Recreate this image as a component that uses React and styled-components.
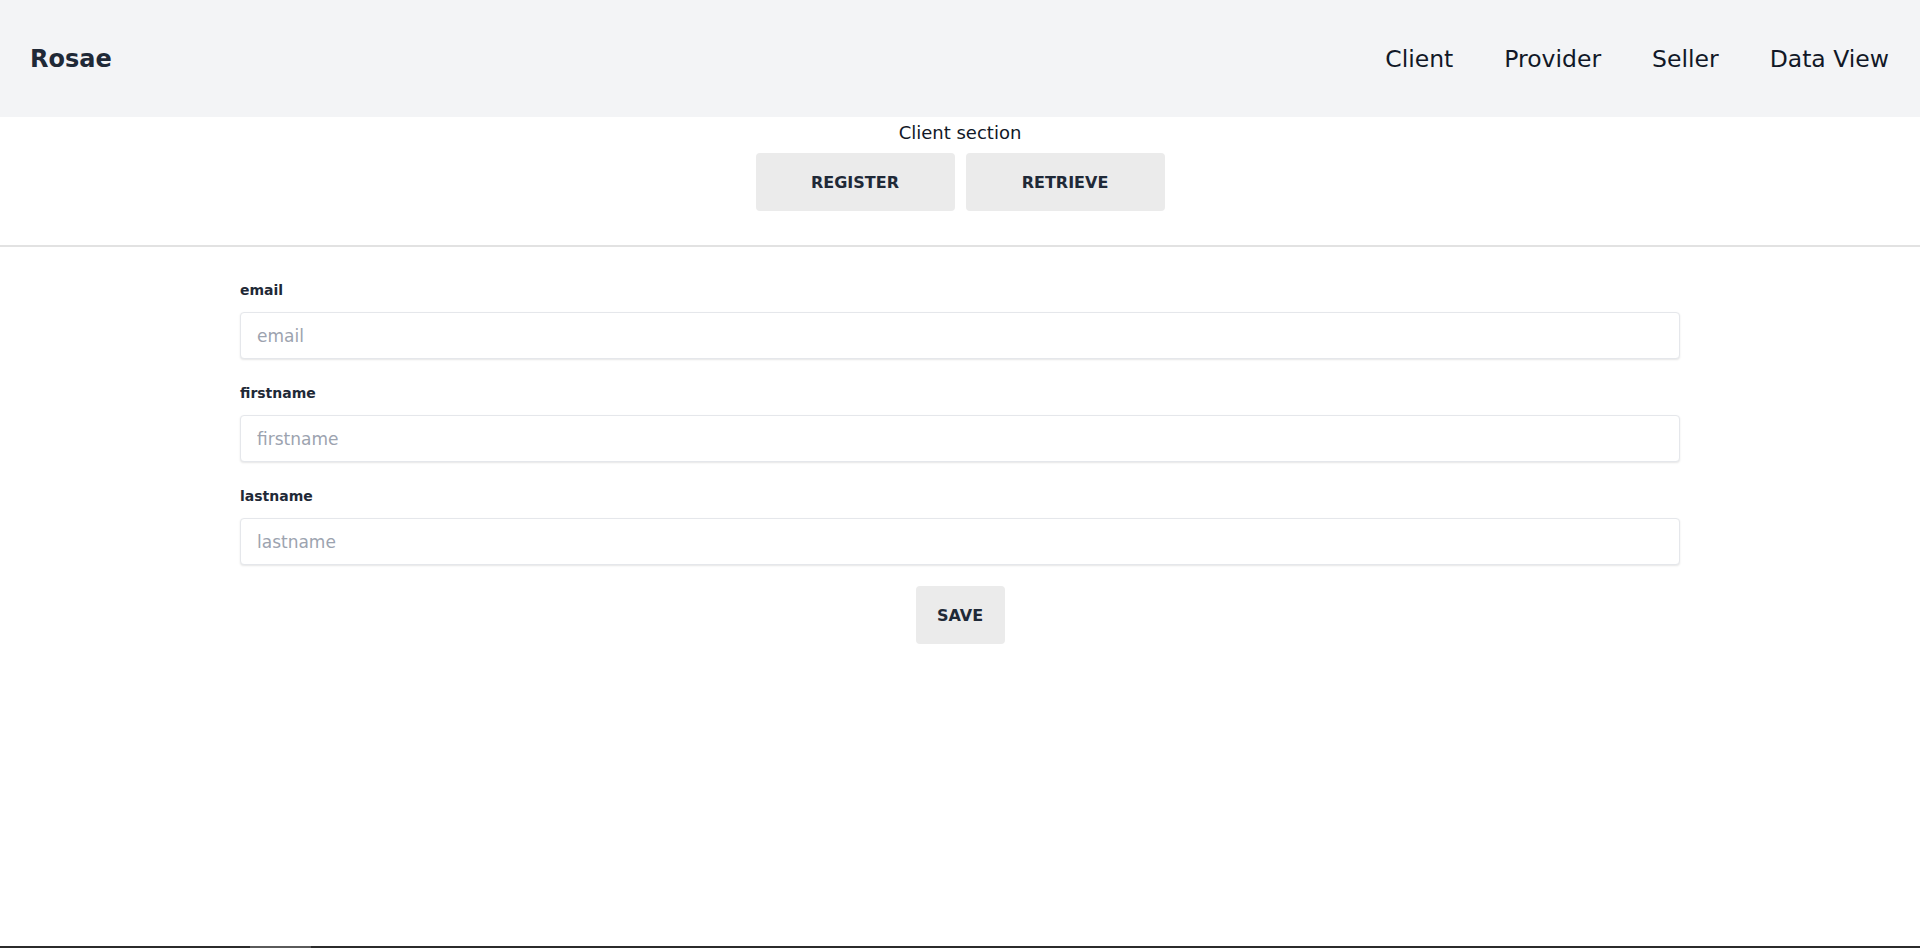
import React, { useState } from "react";
import styled, { createGlobalStyle } from "styled-components";

const GlobalStyle = createGlobalStyle`
  * {
    box-sizing: border-box;
  }

  body {
    margin: 0;
    background: #fff;
    font-family: "Comic Sans MS", "DejaVu Sans", sans-serif;
    color: #1f2937;
  }
`;

const App = () => {
  const [section, setSection] = useState("register");
  const [form, setForm] = useState({ email: "", firstname: "", lastname: "" });

  const handleChange = (e) => {
    setForm({ ...form, [e.target.name]: e.target.value });
  };

  const handleSave = (e) => {
    e.preventDefault();
  };

  return (
    <>
      <GlobalStyle />
      <Header>
        <Brand>Rosae</Brand>
        <Nav>
          <NavLink href="#client">Client</NavLink>
          <NavLink href="#provider">Provider</NavLink>
          <NavLink href="#seller">Seller</NavLink>
          <NavLink href="#data">Data View</NavLink>
        </Nav>
      </Header>

      <Section>
        <SectionTitle>Client section</SectionTitle>
        <Tabs>
          <Button $wide onClick={() => setSection("register")}>
            REGISTER
          </Button>
          <Button $wide onClick={() => setSection("retrieve")}>
            RETRIEVE
          </Button>
        </Tabs>
      </Section>

      <Divider />

      <Form onSubmit={handleSave} data-section={section}>
        {["email", "firstname", "lastname"].map((field) => (
          <Field key={field}>
            <Label htmlFor={field}>{field}</Label>
            <Input
              id={field}
              name={field}
              type="text"
              value={form[field]}
              onChange={handleChange}
              placeholder={field}
            />
          </Field>
        ))}
        <Button type="submit">SAVE</Button>
      </Form>

      <BottomBar>
        <Thumb />
      </BottomBar>
    </>
  );
};

const Header = styled.header`
  height: 117px;
  background: #f3f4f6;
  display: flex;
  align-items: center;
  justify-content: space-between;
  padding: 0 31px 0 30px;
`;

const Brand = styled.div`
  font-size: 24px;
  font-weight: 700;
  color: #1f2937;
`;

const Nav = styled.nav`
  display: flex;
  align-items: center;
  gap: 51px;
`;

const NavLink = styled.a`
  font-size: 23.5px;
  color: #111827;
  text-decoration: none;
  cursor: pointer;
`;

const Section = styled.div`
  display: flex;
  flex-direction: column;
  align-items: center;
  padding-top: 4px;
`;

const SectionTitle = styled.p`
  margin: 0;
  font-size: 18px;
  line-height: 24px;
  color: #111827;
`;

const Tabs = styled.div`
  display: flex;
  gap: 11px;
  margin-top: 8px;
`;

const Button = styled.button`
  width: ${(p) => (p.$wide ? "199px" : "89px")};
  height: 58px;
  background: #ebebeb;
  border: none;
  border-radius: 4px;
  font-family: inherit;
  font-size: 16px;
  font-weight: 700;
  color: #1f2937;
  cursor: pointer;
  padding: 0;
`;

const Divider = styled.hr`
  margin: 34px 0 0;
  border: none;
  border-top: 2px solid #e2e2e2;
`;

const Form = styled.form`
  width: 75%;
  margin: 33px auto 0;
  display: flex;
  flex-direction: column;
  align-items: center;
`;

const Field = styled.div`
  width: 100%;
  margin-bottom: 24px;

  &:last-of-type {
    margin-bottom: 21px;
  }
`;

const Label = styled.label`
  display: block;
  font-size: 14px;
  font-weight: 700;
  line-height: 20px;
  color: #1f2937;
  margin-bottom: 12px;
`;

const Input = styled.input`
  width: 100%;
  height: 47px;
  padding: 0 16px;
  border: 1px solid #e5e7eb;
  border-radius: 4px;
  box-shadow: 0 1px 2px rgba(0, 0, 0, 0.1);
  font-family: inherit;
  font-size: 17px;
  color: #1f2937;
  outline: none;

  &::placeholder {
    color: #9ca3af;
  }
`;

const BottomBar = styled.div`
  position: fixed;
  left: 0;
  right: 0;
  bottom: 0;
  height: 2px;
  background: #2b2b2b;
`;

const Thumb = styled.div`
  margin-left: 250px;
  width: 61px;
  height: 2px;
  background: #5a5a5a;
`;

export default App;
